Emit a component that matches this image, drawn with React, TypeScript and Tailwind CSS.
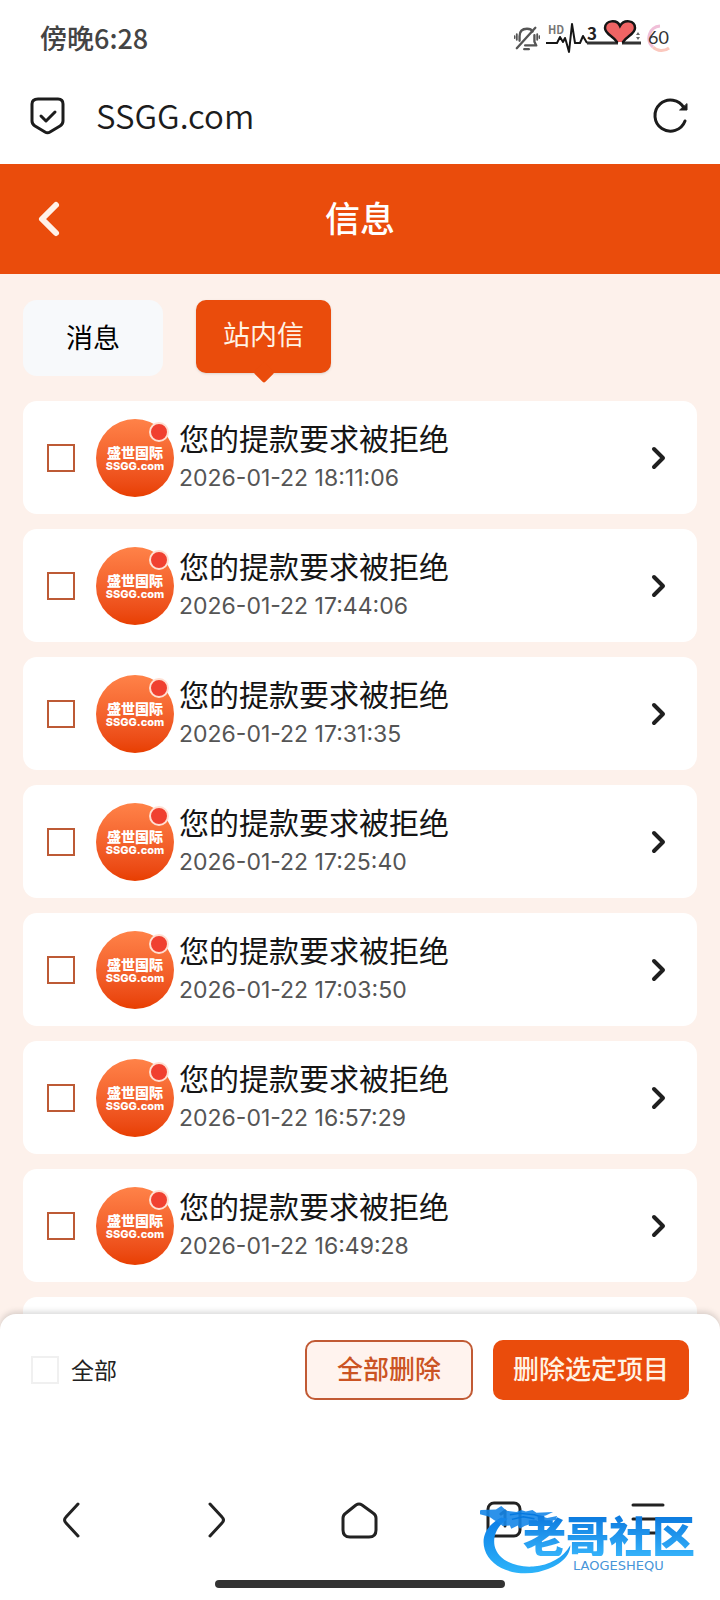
import { useState } from 'react';
import type { ReactNode } from 'react';

type Message = {
  id: number;
  title: string;
  time: string;
};

const messages: Message[] = [
  { id: 1, title: '您的提款要求被拒绝', time: '2026-01-22 18:11:06' },
  { id: 2, title: '您的提款要求被拒绝', time: '2026-01-22 17:44:06' },
  { id: 3, title: '您的提款要求被拒绝', time: '2026-01-22 17:31:35' },
  { id: 4, title: '您的提款要求被拒绝', time: '2026-01-22 17:25:40' },
  { id: 5, title: '您的提款要求被拒绝', time: '2026-01-22 17:03:50' },
  { id: 6, title: '您的提款要求被拒绝', time: '2026-01-22 16:57:29' },
  { id: 7, title: '您的提款要求被拒绝', time: '2026-01-22 16:49:28' },
];

function StatusBar() {
  return (
    <div className="flex h-[76px] items-center justify-between pl-10 pr-11 text-[#444]">
      <span className="text-[27px] font-medium leading-10">傍晚6:28</span>
      <div className="flex items-center">
        <svg width="26" height="26" viewBox="0 0 28 28" fill="none" stroke="#555" strokeWidth="2" strokeLinecap="round" strokeLinejoin="round" aria-hidden="true">
          <path d="M6 17v-5c0-5 3-8 8-8 3 0 5 1 6 3M22 11v7l2 4H12" strokeWidth="2.500" />
          <path d="M11 26h5M3 25L23 3" strokeWidth="2.500" />
          <path d="M3 10v6M0.500 12v2M25 10v6M27.500 12v2" />
        </svg>
        <svg className="ml-1" width="98" height="40" viewBox="0 0 98 40" fill="none" aria-hidden="true">
          <text x="4" y="16" fontSize="11" fontWeight="700" fill="#777">HD</text>
          <path d="M2 25h11l3-6 3 5 2-4 1 3 3 11 3-28 3 19h5l3-7 4 7" stroke="#151515" strokeWidth="2" strokeLinejoin="round" />
          <path d="M43 25h31M78 25h19" stroke="#333" strokeWidth="3" />
          <text x="43" y="22" fontSize="17" fontWeight="700" fill="#222">3</text>
          <path d="M73 24C69 18 61 16 61 10c0-8 12-9 15-2 4-7 15-6 15 2 0 6-8 8-12 14" fill="#ef6464" stroke="#151515" strokeWidth="2.500" strokeLinecap="round" />
          <path d="M92 17l2-3 2 3zM92 19l2 3 2-3z" fill="#666" />
        </svg>
        <svg className="ml-1" width="30" height="30" viewBox="0 0 30 30" fill="none" aria-hidden="true">
          <path d="M14 3A12 12 0 0 0 7 24" stroke="#f0bfd8" strokeWidth="3" />
          <path d="M7 24A12 12 0 0 0 23 25" stroke="#fbc8be" strokeWidth="3" />
          <text x="2" y="21" fontSize="18" fill="#333" className="font-['Lato',sans-serif]">60</text>
        </svg>
      </div>
    </div>
  );
}

function AddressBar() {
  return (
    <div className="flex h-20 items-center px-[30px]">
      <svg width="36" height="38" viewBox="0 0 36 38" fill="none" stroke="#1c1c1c" strokeWidth="3" strokeLinecap="round" strokeLinejoin="round" aria-hidden="true">
        <path d="M8 2h20q5 0 5 5v17q0 3-3 5l-10 6q-2.500 1.500-5 0l-10-6q-3-2-3-5V7q0-5 6-5z" />
        <path d="M11 19l5 5 9-9" />
      </svg>
      <span className="ml-[30px] flex-1 pb-[2px] text-[33px] font-[350] leading-10 text-[#1c1c1c]">SSGG.com</span>
      <button type="button" aria-label="刷新">
        <svg width="38" height="38" viewBox="0 0 38 38" fill="none" stroke="#1c1c1c" strokeWidth="3" strokeLinecap="round" strokeLinejoin="round">
          <path d="M33 24A15.500 15.500 0 1 1 32 11" />
          <path d="M35 7v6h-7z" fill="#1c1c1c" strokeWidth="1" />
        </svg>
      </button>
    </div>
  );
}

function Avatar() {
  return (
    <div className="relative flex size-[78px] shrink-0 flex-col items-center justify-center rounded-full bg-linear-to-b from-[#ff8248] to-[#e83e00] text-white">
      <span className="text-[14px] font-black leading-4">盛世国际</span>
      <span className="font-['Inter','Liberation_Sans',sans-serif] text-[11px] font-extrabold leading-[12px]">SSGG.com</span>
      <span className="absolute right-[5px] top-[3px] size-5 rounded-full border-2 border-[#ffdfd2] bg-[#f04030]" />
    </div>
  );
}

type CardProps = {
  message: Message;
  checked: boolean;
  onToggle: () => void;
};

function MessageCard({ message, checked, onToggle }: CardProps) {
  return (
    <li className="flex items-center rounded-[14px] bg-white pb-[17px] pl-6 pr-[26px] pt-[18px]">
      <input
        type="checkbox"
        aria-label={`${message.title} ${message.time}`}
        checked={checked}
        onChange={onToggle}
        className="size-7 shrink-0 appearance-none border-2 border-[#bd5a35] checked:bg-[#ea4c0c]"
      />
      <div className="ml-[21px]">
        <Avatar />
      </div>
      <div className="ml-[5px] min-w-0 flex-1">
        <h2 className="mb-1 text-[30px] font-normal leading-9 text-[#151515]">{message.title}</h2>
        <p className="font-['Inter','Noto_Sans_CJK_SC',sans-serif] text-[23px] leading-[38px] text-[#555]">{message.time}</p>
      </div>
      <button type="button" aria-label="查看">
        <svg width="24" height="28" viewBox="0 0 24 28" fill="none" stroke="#1f1f1f" strokeWidth="4" strokeLinecap="round" strokeLinejoin="round">
          <path d="M7 5l9 9-9 9" />
        </svg>
      </button>
    </li>
  );
}

function NavButton({ label, children }: { label: string; children: ReactNode }) {
  return (
    <button type="button" aria-label={label} className="flex h-[72px] items-center justify-center">
      <svg width="40" height="40" viewBox="0 0 40 40" fill="none" stroke="#222" strokeWidth="3" strokeLinecap="round" strokeLinejoin="round">
        {children}
      </svg>
    </button>
  );
}

function BrowserNav() {
  return (
    <nav className="grid grid-cols-5">
      <NavButton label="后退">
        <path d="M26 4L14 17q-3 3 0 6l12 13" />
      </NavButton>
      <NavButton label="前进">
        <path d="M14 4l12 13q3 3 0 6L14 36" />
      </NavButton>
      <NavButton label="主页">
        <path d="M16 5q3-2 6 0l11 8q3 2 3 5V30q0 7-7 7H10q-7 0-7-7V18q0-3 3-5z" />
      </NavButton>
      <NavButton label="标签页">
        <rect x="4" y="3" width="32" height="33" rx="6" />
        <path d="M17 14l4-3v15" />
      </NavButton>
      <NavButton label="菜单">
        <path d="M5 5h30M5 19h30M5 33h25" />
      </NavButton>
    </nav>
  );
}

function Watermark() {
  return (
    <div className="pointer-events-none absolute bottom-[23px] right-[15px] h-[77px] w-[225px]">
      <svg className="absolute left-0 top-0" width="93" height="77" viewBox="60 60 280 231" aria-hidden="true">
        <defs>
          <linearGradient id="swirl" x1="0" y1="0" x2="0" y2="1">
            <stop offset="0" stopColor="#0a7be6" />
            <stop offset="1" stopColor="#2db4fa" />
          </linearGradient>
        </defs>
        <path d="M124 112C84 132 62 168 74 208C90 264 166 292 236 276C290 264 332 234 332 196C310 234 270 256 220 260C160 264 112 236 104 198C98 168 112 136 144 116Z" fill="url(#swirl)" />
        <path d="M64 90l44-2 16-10 16 14 30 4 14-6 14 4 20-4 12 8 50-2-22 10-16 2 20 6 30-6-4 12-36 6-16-6-12 6 18 14-30-8-18 6-14 8-6-10-20 10-4-10-22 2-8-8-18-10-14-10-46-12z" fill="#1686e8" opacity="0.9" />
        <path d="M150 104l30-4 44 4 18 6M156 118l34-8 34 6" fill="none" stroke="#0478df" strokeWidth="4" />
      </svg>
      <div className="relative pl-[43px] pt-3">
        <p className="bg-linear-to-b from-[#0874dc] to-[#35b2fa] bg-clip-text text-[43px] font-black leading-[44px] text-transparent">老哥社区</p>
        <p className="pl-[50px] font-['DejaVu_Sans',sans-serif] text-[13px] leading-5 text-[#4795d8]">LAOGESHEQU</p>
      </div>
    </div>
  );
}

export default function App() {
  const [selected, setSelected] = useState<number[]>([]);
  const allSelected = selected.length === messages.length;

  const toggle = (id: number) =>
    setSelected((prev) => (prev.includes(id) ? prev.filter((x) => x !== id) : [...prev, id]));

  return (
    <div className="relative flex h-screen flex-col overflow-hidden bg-white font-['Noto_Sans_CJK_SC',sans-serif]">
      <div className="shrink-0 pb-2">
        <StatusBar />
        <AddressBar />
      </div>

      <header className="grid h-[110px] shrink-0 grid-cols-[80px_1fr_80px] items-center bg-[#ea4c0c] text-white">
        <button type="button" aria-label="返回" className="pl-[34px]">
          <svg width="30" height="40" viewBox="0 0 30 40" fill="none" stroke="#fff1e8" strokeWidth="6" strokeLinecap="round" strokeLinejoin="round">
            <path d="M22 6L8 20l14 14" />
          </svg>
        </button>
        <h1 className="pb-1 text-center text-[35px] font-medium leading-[52px]">信息</h1>
      </header>

      <main className="min-h-0 flex-1 overflow-hidden bg-[#fdf1eb] px-[23px] pt-[26px]">
        <div className="mb-[25px] flex h-[76px] items-start gap-[33px]">
          <button type="button" className="h-[76px] rounded-[14px] bg-[#f7f9fb] px-[43px] pb-[2px] text-[27px] leading-10 text-black">
            消息
          </button>
          <button type="button" className="relative h-[73px] rounded-[10px] bg-[#ea4c0c] px-[27px] pb-[6px] text-[27px] leading-10 text-[#fff3e4] shadow-sm">
            站内信
            <span className="absolute -bottom-[7px] left-1/2 size-[15px] -translate-x-1/2 rotate-45 rounded-[2px] bg-[#ea4c0c]" />
          </button>
        </div>

        <ul className="flex flex-col gap-[15px]">
          {messages.map((m) => (
            <MessageCard key={m.id} message={m} checked={selected.includes(m.id)} onToggle={() => toggle(m.id)} />
          ))}
          <li className="h-28 shrink-0 rounded-[14px] bg-white" />
        </ul>
      </main>

      <footer className="relative -mt-4 shrink-0 rounded-t-2xl bg-white shadow-[0_-2px_6px_rgba(0,0,0,0.16)]">
        <div className="flex items-center gap-5 px-[31px] pb-[84px] pt-[26px]">
          <label className="mr-auto flex items-center gap-3 text-[23px] leading-8 text-[#222]">
            <input
              type="checkbox"
              checked={allSelected}
              onChange={() => setSelected(allSelected ? [] : messages.map((m) => m.id))}
              className="size-7 appearance-none border-2 border-[#f0f0f0] checked:bg-[#ea4c0c]"
            />
            <span className="pb-[2px]">全部</span>
          </label>
          <button type="button" className="h-[60px] rounded-[10px] border-2 border-[#c15a34] bg-[#fff3ee] px-[30px] pb-1 text-[26px] font-medium leading-9 text-[#cb5323]">
            全部删除
          </button>
          <button type="button" className="h-[60px] rounded-[10px] bg-[#ea4c0c] px-5 pb-1 text-[26px] font-medium leading-9 text-[#fff3e4]">
            删除选定项目
          </button>
        </div>
        <BrowserNav />
        <div className="pb-3 pt-6">
          <div className="mx-auto h-2 w-[290px] rounded-full bg-[#333]" />
        </div>
      </footer>

      <Watermark />
    </div>
  );
}
